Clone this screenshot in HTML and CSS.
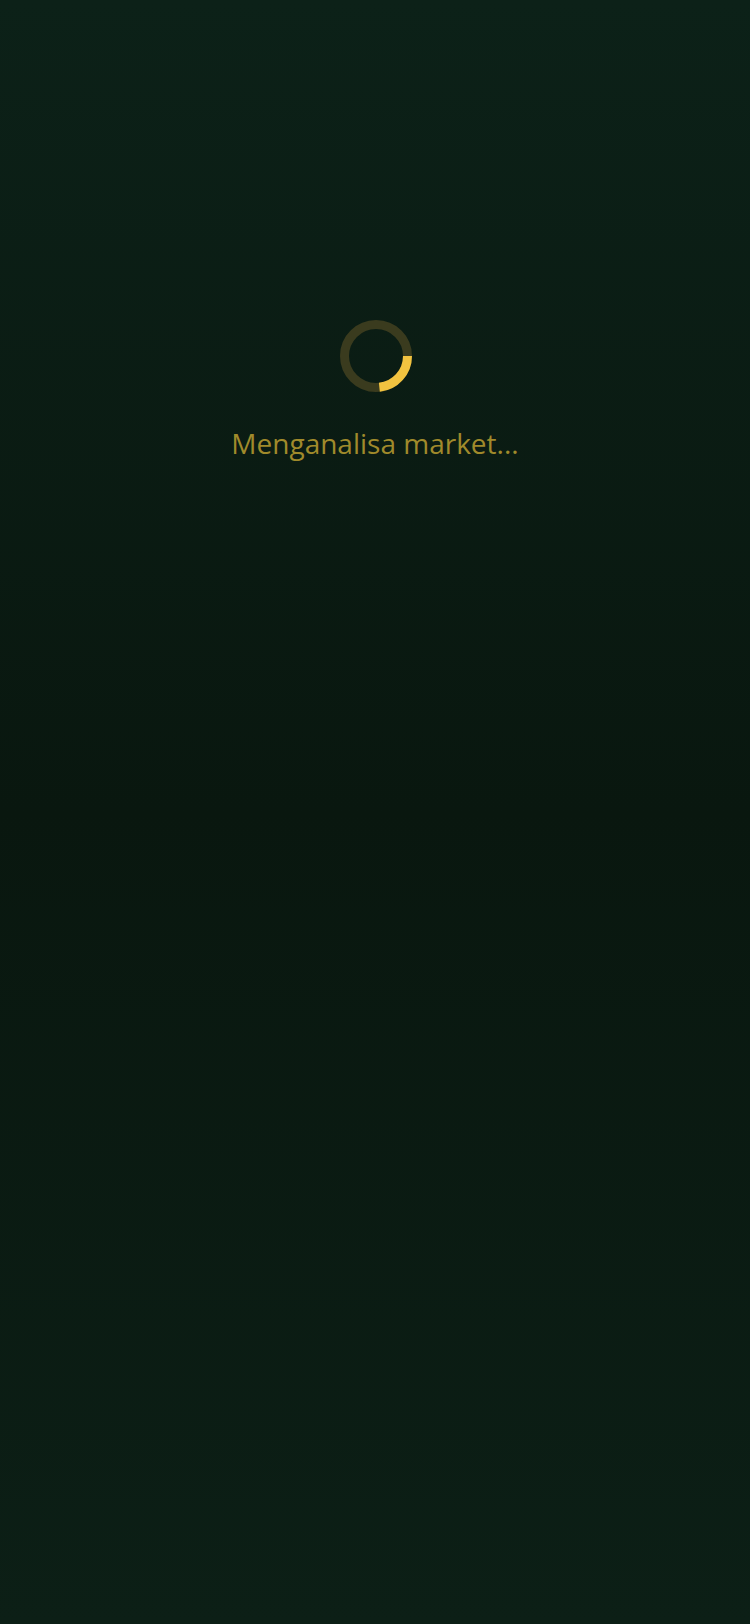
FILE: index.html
```html
<!DOCTYPE html>
<html lang="id">
<head>
<meta charset="utf-8">
<title>Menganalisa market</title>
<link rel="stylesheet" href="styles.css">
</head>
<body>
<main class="loader">
  <svg class="spinner" width="72" height="72" viewBox="0 0 72 72">
    <circle class="track" cx="36" cy="36" r="31.5" fill="none" stroke-width="9"/>
    <circle class="arc" cx="36" cy="36" r="31.5" fill="none" stroke-width="9" stroke-dasharray="46 200"/>
  </svg>
  <p class="label">Menganalisa market...</p>
</main>
</body>
</html>
```
FILE: styles.css
```css
html, body {
  margin: 0;
  padding: 0;
}
body {
  width: 750px;
  min-height: 1624px;
  background: linear-gradient(180deg, #0c2118 0%, #09170f 50%, #0c1f16 100%);
  font-family: "Open Sans", "Noto Sans", sans-serif;
}
.loader {
  display: flex;
  flex-direction: column;
  align-items: center;
  padding-top: 320px;
}
.spinner {
  display: block;
  margin-left: 2px;
}
.track {
  stroke: #3a3b1e;
}
.arc {
  stroke: #f2c340;
}
.label {
  margin: 31px 0 0;
  font-size: 28px;
  line-height: 40px;
  color: #a08a2b;
}
```
